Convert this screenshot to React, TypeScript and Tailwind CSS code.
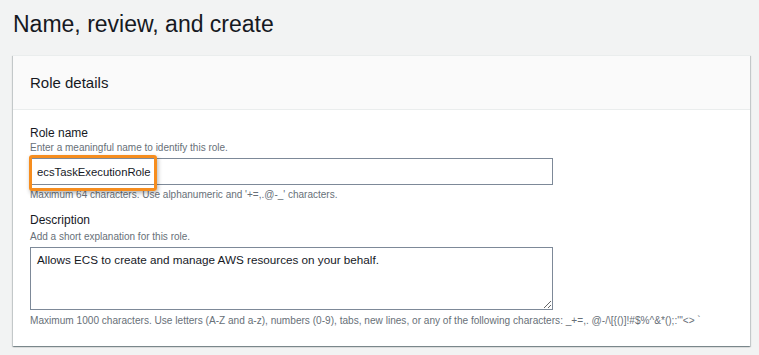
import React from 'react';

export default function App() {
  return (
    <div className="min-h-screen bg-[#f2f3f3] pl-[13px] pr-[9px] pt-[10px] font-['Liberation_Sans',Arial,sans-serif] text-[#16191f]">
      <h1 className="text-[23px] leading-[28px] font-normal">Name, review, and create</h1>

      <section className="mt-[17px] bg-white border-t border-[#eaeded] shadow-[0_1px_1px_0_rgba(0,28,36,0.3),1px_1px_1px_0_rgba(0,28,36,0.15),-1px_1px_1px_0_rgba(0,28,36,0.15)]">
        <div className="h-[54px] bg-[#fafafa] border-b border-[#eaeded] px-[17px] flex items-center">
          <h2 className="text-[15px] leading-[20px]">Role details</h2>
        </div>

        <div className="px-[17px] pt-[16px] pb-[19px]">
          <div>
            <label className="block text-[12px] leading-[15px]">Role name</label>
            <p className="text-[10px] leading-[13px] text-[#687078]">Enter a meaningful name to identify this role.</p>
            <div className="relative mt-[4px] w-[523px]">
              <input
                readOnly
                value="ecsTaskExecutionRole"
                className="w-full h-[27px] border border-[#7d8998] bg-white px-[6px] text-[11.3px] text-[#16191f] outline-none"
              />
              <div className="absolute left-[-1px] top-[-3px] w-[128px] h-[36px] border-[3px] border-[#f68d1e] rounded-[3px] shadow-[1px_2px_4px_rgba(0,0,0,0.3)] pointer-events-none" />
            </div>
            <p className="mt-[3px] text-[10px] leading-[13px] text-[#687078]">
              Maximum 64 characters. Use alphanumeric and '+=,.@-_' characters.
            </p>
          </div>

          <div className="mt-[12px]">
            <label className="block text-[12px] leading-[15px]">Description</label>
            <p className="mt-[2px] text-[10px] leading-[13px] text-[#687078]">Add a short explanation for this role.</p>
            <textarea
              readOnly
              value="Allows ECS to create and manage AWS resources on your behalf."
              className="block mt-[4px] w-[523px] h-[63px] border border-[#7d8998] bg-white px-[6px] pt-[4px] text-[11.7px] leading-[16px] text-[#16191f] outline-none resize"
            />
            <p className="mt-[4px] text-[10.1px] leading-[13px] text-[#687078] whitespace-nowrap">
              Maximum 1000 characters. Use letters (A-Z and a-z), numbers (0-9), tabs, new lines, or any of the following characters: _+=,. @-/\[{'{'}()]!#$%^&amp;*();:'"&lt;&gt; `
            </p>
          </div>
        </div>
      </section>
    </div>
  );
}
